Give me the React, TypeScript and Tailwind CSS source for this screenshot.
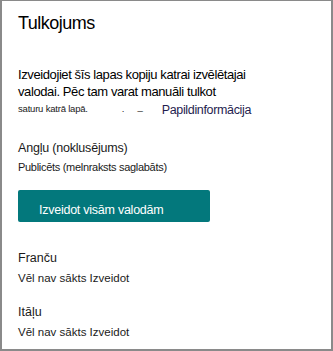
import React from "react";

function Status({ name, status }: { name: string; status: string }) {
  return (
    <div className="flex flex-col">
      <div className="text-[12.5px] leading-[16px]">{name}</div>
      <div className="mt-[4px] text-[11.5px] leading-[16px]">{status}</div>
    </div>
  );
}

export default function App() {
  return (
    <div className="w-[333px] h-[351px] bg-white box-border border-t border-l-2 border-r-2 border-b-2 border-[#8a8a8a] text-[#1a1a1a] font-['Liberation_Sans',Arial,sans-serif]">
      <div className="flex flex-col pl-[16px] pt-[11px]">
        <div className="text-[18px] leading-[22px] tracking-[-0.5px] text-black">Tulkojums</div>
        <div className="mt-[32px] text-[13px] leading-[17px] tracking-[-0.4px] text-black">
          <div>Izveidojiet šīs lapas kopiju katrai izvēlētajai</div>
          <div>valodai. Pēc tam varat manuāli tulkot</div>
        </div>
        <div className="flex items-start h-[16px]">
          <span className="mt-[3px] text-[9.5px] leading-[12px] tracking-[-0.2px]">saturu katrā lapā.</span>
          <span className="ml-[34px] mt-[3px] text-[9.5px] leading-[12px]">.</span>
          <span className="ml-[13px] mt-[1px] text-[9.5px] leading-[12px]">_</span>
          <span className="ml-[19px] mt-[2px] text-[12.5px] leading-[16px] tracking-[-0.35px] text-[#1f1d4f]">Papildinformācija</span>
        </div>
        <div className="mt-[24px] text-[12.5px] leading-[16px] tracking-[-0.2px]">Angļu (noklusējums)</div>
        <div className="mt-[4px] text-[11px] leading-[14px] tracking-[-0.3px]">Publicēts (melnraksts saglabāts)</div>
        <button className="mt-[16px] w-[192px] h-[32px] rounded-[2px] bg-[#03787c] text-white text-[12.5px] leading-[16px] tracking-[-0.25px] pl-[21px] pt-[12px] flex items-start">
          Izveidot visām valodām
        </button>
        <div className="mt-[28px]">
          <Status name="Franču" status="Vēl nav sākts Izveidot" />
        </div>
        <div className="mt-[18px]">
          <Status name="Itāļu" status="Vēl nav sākts Izveidot" />
        </div>
      </div>
    </div>
  );
}
